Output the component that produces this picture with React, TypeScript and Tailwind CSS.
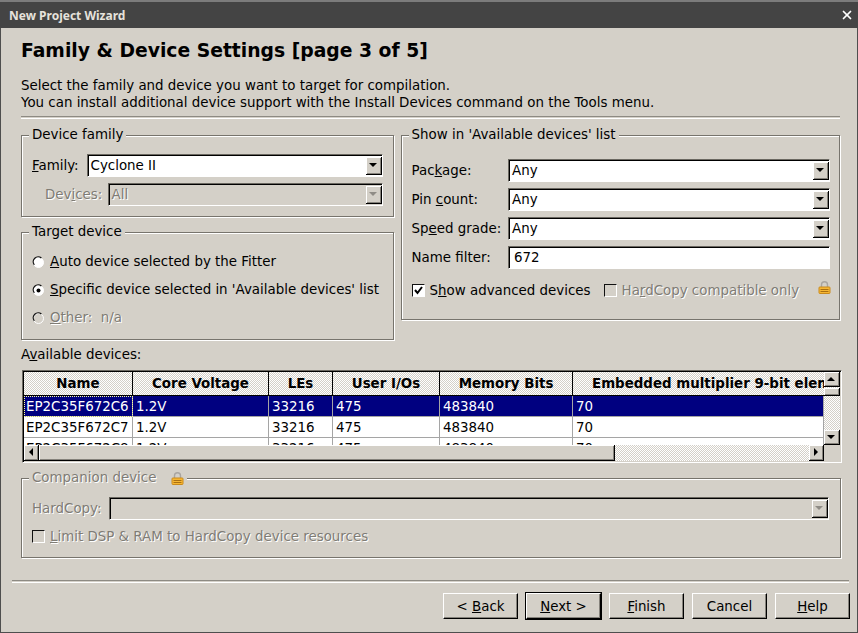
import { ReactNode } from 'react';
import { X } from 'lucide-react';

const dither = 'bg-[repeating-conic-gradient(#ffffff_0_25%,#d4d0c8_0_50%)] bg-[length:2px_2px]';
const disabledText = 'text-[#7f7c75] [text-shadow:1px_1px_0_#ffffff]';

const columns = [
  { label: 'Name', width: 'w-[109px]', align: 'pl-[2px]' },
  { label: 'Core Voltage', width: 'w-[136px]', align: 'pl-[3px]' },
  { label: 'LEs', width: 'w-[64px]', align: 'pl-[3px]' },
  { label: 'User I/Os', width: 'w-[107px]', align: 'pl-[3px]' },
  { label: 'Memory Bits', width: 'w-[133px]', align: 'pl-[3px]' },
  { label: 'Embedded multiplier 9-bit elements', width: 'w-[251px]', align: 'pl-[3px]' },
];

const rows = [
  ['EP2C35F672C6', '1.2V', '33216', '475', '483840', '70'],
  ['EP2C35F672C7', '1.2V', '33216', '475', '483840', '70'],
  ['EP2C35F672C8', '1.2V', '33216', '475', '483840', '70'],
];

function GroupBox({ title, className, children }: { title: ReactNode; className: string; children: ReactNode }) {
  return (
    <div className={`relative border border-[#77746d] shadow-[1px_1px_0_#ffffff,inset_1px_1px_0_#ffffff] ${className}`}>
      <div className="absolute left-[7px] top-[-10px] flex h-[18px] items-center bg-[#d4d0c8] px-[3px] leading-[18px]">{title}</div>
      {children}
    </div>
  );
}

function Arrow({ dir, disabled }: { dir: 'up' | 'down' | 'left' | 'right'; disabled?: boolean }) {
  const points = { up: '4,1 0,5 8,5', down: '0,1 8,1 4,5', left: '5,0 5,8 1,4', right: '1,0 1,8 5,4' }[dir];
  const fill = disabled ? '#8f8c86' : '#000000';
  return (
    <svg width={dir === 'up' || dir === 'down' ? 9 : 6} height={dir === 'up' || dir === 'down' ? 6 : 9} viewBox={dir === 'up' || dir === 'down' ? '0 0 9 6' : '0 0 6 9'}>
      <polygon points={points} fill={fill} />
    </svg>
  );
}

function RaisedButton({ className, children }: { className: string; children?: ReactNode }) {
  return (
    <div className={`flex shrink-0 items-center justify-center border-r border-b border-black bg-[#d4d0c8] shadow-[inset_1px_1px_0_#ffffff,inset_-1px_-1px_0_#85827b] ${className}`}>
      {children}
    </div>
  );
}

function Combo({ value, className, disabled }: { value: string; className: string; disabled?: boolean }) {
  return (
    <div className={`flex items-center border border-t-[#6b6861] border-l-[#6b6861] border-r-white border-b-white pl-[2px] shadow-[inset_1px_1px_0_#000000] ${disabled ? 'bg-[#d4d0c8]' : 'bg-white'} ${className}`}>
      <span className={`flex-1 pl-[1px] ${disabled ? disabledText : ''}`}>{value}</span>
      <RaisedButton className="h-[18px] w-[16px]">
        <Arrow dir="down" disabled={disabled} />
      </RaisedButton>
    </div>
  );
}

function Radio({ checked, disabled }: { checked?: boolean; disabled?: boolean }) {
  return (
    <svg width="14" height="14" viewBox="0 0 14 14" className="shrink-0">
      <circle cx="6.5" cy="7.5" r="5" fill={disabled ? '#d4d0c8' : '#ffffff'} stroke="#ffffff" />
      <path d="M2.3 9.8 A4.9 4.9 0 0 1 9.4 3.1" fill="none" stroke="#111111" strokeWidth="1.3" />
      {checked && <circle cx="6.5" cy="7.5" r="2" fill="#000000" />}
    </svg>
  );
}

function Check({ checked, disabled }: { checked?: boolean; disabled?: boolean }) {
  return (
    <div className={`flex h-[13px] w-[13px] shrink-0 items-center justify-center border border-t-[#111111] border-l-[#111111] border-r-white border-b-white ${disabled ? 'bg-[#d4d0c8]' : 'bg-white'}`}>
      {checked && (
        <svg width="9" height="9" viewBox="0 0 9 9">
          <path d="M1 4 L3.5 7 L8 1" fill="none" stroke="#000000" strokeWidth="2" />
        </svg>
      )}
    </div>
  );
}

function Lock() {
  return (
    <svg width="13" height="13" viewBox="0 0 13 13" className="shrink-0">
      <path d="M3.5 6 V3.8 A3 3 0 0 1 9.5 3.8 V6" fill="none" stroke="#a9a5a0" strokeWidth="1.4" />
      <rect x="1" y="6" width="11" height="6.5" rx="0.8" fill="#f7b733" stroke="#c98a1c" />
      <rect x="2.5" y="8" width="8" height="1" fill="#a96f12" />
      <rect x="2.5" y="10" width="8" height="1" fill="#a96f12" />
    </svg>
  );
}

function WizardButton({ isDefault, children }: { isDefault?: boolean; children: ReactNode }) {
  return (
    <div className={`flex h-[26px] w-[75px] items-center justify-center border border-l-white border-t-white border-r-black border-b-black bg-[#d4d0c8] shadow-[inset_-1px_-1px_0_#85827b] ${isDefault ? 'outline outline-1 outline-black' : ''}`}>
      <span>{children}</span>
    </div>
  );
}

export default function App() {
  return (
    <div className="flex h-[633px] w-[858px] flex-col overflow-hidden bg-[#d4d0c8] font-['DejaVu_Sans',sans-serif] text-[13.4px] leading-[17px] text-black">
      <div className="h-[2px] shrink-0 bg-[#7c7c7c]" />
      {/* Title bar */}
      <div className="flex h-[26px] shrink-0 items-center justify-between bg-[#444444] pl-[9px] pr-[4px] font-['Noto_Sans',sans-serif] text-[12px] font-bold text-[#e6e2dc]">
        <span>New Project Wizard</span>
        <X className="h-[14px] w-[14px] text-white" strokeWidth={3} />
      </div>

      <div className="flex flex-1 flex-col border-x border-b border-[#4e4e4e] pl-[20px] pr-[17px]">
        <h1 className="mt-[11px] text-[18.76px] font-bold leading-[24px]">Family &amp; Device Settings [page 3 of 5]</h1>
        <p className="mt-[14px]">Select the family and device you want to target for compilation.</p>
        <p>You can install additional device support with the Install Devices command on the Tools menu.</p>
        <div className="mt-[5px] h-[2px] border-t border-[#8d8a83] shadow-[0_1px_0_#ffffff]" />

        <div className="mt-[17px] flex items-start gap-[7px]">
          <div className="flex w-[373px] flex-col gap-[15px]">
            <GroupBox title="Device family" className="h-[82px] pl-[10px] pr-[10px] pt-[18px]">
              <div className="flex items-center justify-between">
                <span>
                  <u>F</u>amily:
                </span>
                <Combo value="Cyclone II" className="h-[23px] w-[296px]" />
              </div>
              <div className="mt-[6px] flex items-center justify-between">
                <span className={`pl-[13px] ${disabledText}`}>
                  Dev<u>i</u>ces:
                </span>
                <Combo value="All" disabled className="h-[23px] w-[275px]" />
              </div>
            </GroupBox>
            <GroupBox title="Target device" className="h-[108px] pl-[10px] pt-[20px]">
              <div className="flex flex-col gap-[11px]">
                <div className="flex items-center gap-[4px]">
                  <Radio />
                  <span>
                    <u>A</u>uto device selected by the Fitter
                  </span>
                </div>
                <div className="flex items-center gap-[4px]">
                  <Radio checked />
                  <span>
                    <u>S</u>pecific device selected in 'Available devices' list
                  </span>
                </div>
                <div className="flex items-center gap-[4px]">
                  <Radio disabled />
                  <span className={disabledText}>
                    <u>O</u>ther:&nbsp; n/a
                  </span>
                </div>
              </div>
            </GroupBox>
          </div>

          <GroupBox title="Show in 'Available devices' list" className="h-[185px] w-[440px] pl-[10px] pr-[9px] pt-[23px]">
            <div className="flex flex-col gap-[6px]">
              <div className="flex items-center justify-between">
                <span>
                  Pac<u>k</u>age:
                </span>
                <Combo value="Any" className="h-[23px] w-[322px]" />
              </div>
              <div className="flex items-center justify-between">
                <span>
                  Pin <u>c</u>ount:
                </span>
                <Combo value="Any" className="h-[23px] w-[322px]" />
              </div>
              <div className="flex items-center justify-between">
                <span>
                  Sp<u>e</u>ed grade:
                </span>
                <Combo value="Any" className="h-[23px] w-[322px]" />
              </div>
              <div className="flex items-center justify-between">
                <span>Name filter:</span>
                <div className="flex h-[23px] w-[322px] items-center border border-t-[#6b6861] border-l-[#6b6861] border-r-white border-b-white bg-white pl-[5px] shadow-[inset_1px_1px_0_#000000]">
                  672
                </div>
              </div>
            </div>
            <div className="mt-[12px] flex items-center whitespace-nowrap">
              <Check checked />
              <span className="ml-[5px]">
                S<u>h</u>ow advanced devices
              </span>
              <div className="ml-[13px]">
                <Check disabled />
              </div>
              <span className={`ml-[5px] ${disabledText}`}>
                Ha<u>r</u>dCopy compatible only
              </span>
              <div className="mb-[6px] ml-auto mr-[-1px]">
                <Lock />
              </div>
            </div>
          </GroupBox>
        </div>

        <div className="mt-[6px]">
          A<u>v</u>ailable devices:
        </div>

        {/* Device table */}
        <div className="mt-[7px] ml-[1px] flex h-[93px] w-[820px] flex-col border border-t-[#6b6861] border-l-[#6b6861] border-r-white border-b-white p-[1px] pb-0 shadow-[inset_1px_1px_0_#000000]">
          <div className="flex h-[73px] shrink-0">
            <div className="h-[73px] w-[800px] overflow-hidden bg-white">
              <div className="flex h-[24px]">
                {columns.map((col, i) => (
                  <div key={col.label} className={`flex ${col.width} shrink-0 items-center justify-center overflow-hidden whitespace-nowrap border-r border-b border-black pb-[1px] font-bold ${dither} ${i === 5 ? 'justify-start border-r-0 pl-[19px]' : ''}`}>
                    <span>{col.label}</span>
                  </div>
                ))}
              </div>
              {rows.map((row, r) => (
                <div key={row[0]} className={`flex h-[21px] ${r === 0 ? 'bg-[#000080] text-white' : ''}`}>
                  {row.map((cell, i) => (
                    <div key={i} className={`flex ${columns[i].width} shrink-0 items-center border-r border-b border-[#a5a5a5] ${columns[i].align} ${r === 0 && i === 0 ? 'outline-1 -outline-offset-1 outline-dotted outline-[#ffff99]' : ''}`}>
                      {cell}
                    </div>
                  ))}
                </div>
              ))}
            </div>
            {/* Vertical scrollbar */}
            <div className={`flex h-[73px] w-[16px] flex-col ${dither}`}>
              <RaisedButton className="h-[15px] w-[16px]">
                <Arrow dir="up" />
              </RaisedButton>
              <RaisedButton className="mt-[1px] h-[8px] w-[16px]" />
              <div className="flex-1" />
              <RaisedButton className="h-[15px] w-[16px]">
                <Arrow dir="down" />
              </RaisedButton>
            </div>
          </div>
          {/* Horizontal scrollbar */}
          <div className="flex h-[16px] w-[800px]">
            <div className={`flex flex-1 ${dither}`}>
              <RaisedButton className="h-[16px] w-[15px]">
                <Arrow dir="left" />
              </RaisedButton>
              <RaisedButton className="h-[16px] w-[576px]" />
              <div className="flex-1" />
              <RaisedButton className="h-[16px] w-[15px]">
                <Arrow dir="right" />
              </RaisedButton>
            </div>
          </div>
        </div>

        <GroupBox
          title={
            <span className={`flex items-center gap-[15px] ${disabledText}`}>
              Companion device
              <Lock />
            </span>
          }
          className="mt-[15px] h-[80px] w-[820px] pl-[10px] pr-[11px] pt-[18px]"
        >
          <div className="flex items-center justify-between">
            <span className={disabledText}>HardCopy:</span>
            <Combo value="" disabled className="h-[23px] w-[720px]" />
          </div>
          <div className="mt-[8px] flex items-center gap-[5px]">
            <Check disabled />
            <span className={disabledText}>
              <u>L</u>imit DSP &amp; RAM to HardCopy device resources
            </span>
          </div>
        </GroupBox>

        <div className="ml-[-9px] mr-[-9px] mt-[22px] h-[2px] border-t border-[#8d8a83] shadow-[0_1px_0_#ffffff]" />

        <div className="mr-[-10px] mt-[11px] flex justify-end gap-[8px]">
          <WizardButton>
            &lt; <u>B</u>ack
          </WizardButton>
          <WizardButton isDefault>
            <u>N</u>ext &gt;
          </WizardButton>
          <WizardButton>
            <u>F</u>inish
          </WizardButton>
          <WizardButton>Cancel</WizardButton>
          <WizardButton>
            <u>H</u>elp
          </WizardButton>
        </div>
      </div>
    </div>
  );
}
